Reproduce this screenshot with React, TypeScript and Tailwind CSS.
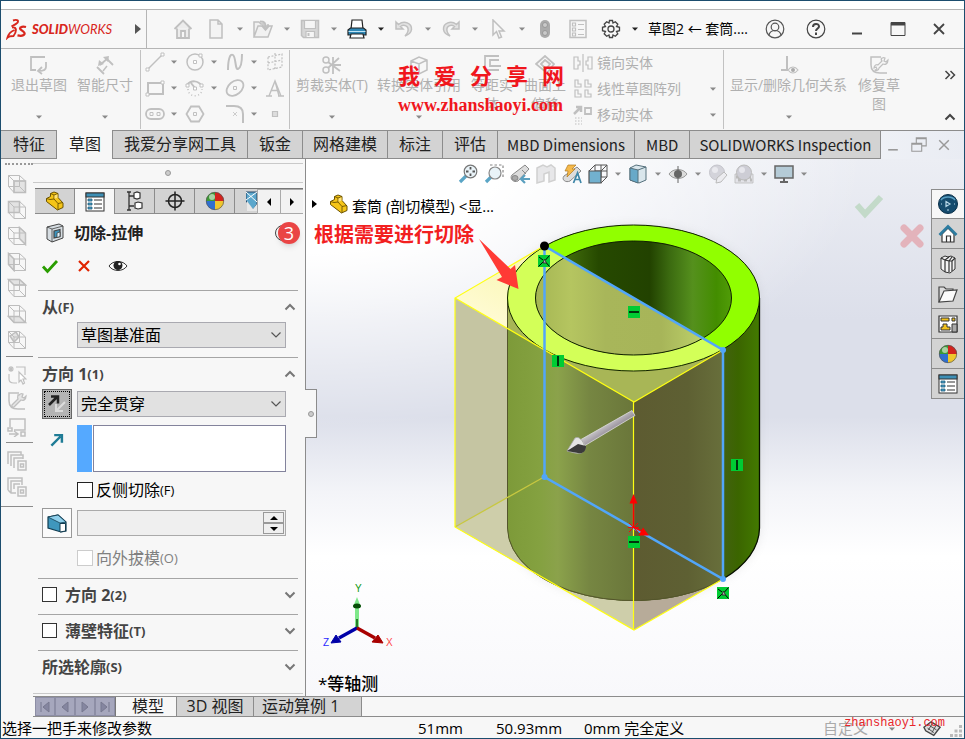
import type { ReactNode } from 'react';

/* ---------- shared bits ---------- */

interface IconProps {
  children: ReactNode;
  size?: number;
  color?: string;
}

function Icon({ children, size = 20, color = '#c0c0c0' }: IconProps) {
  return (
    <svg width={size} height={size} viewBox="0 0 20 20" fill="none" stroke={color} strokeWidth="1.5" className="shrink-0" aria-hidden="true">
      {children}
    </svg>
  );
}

function Caret({ color = '#8a8a8a' }: { color?: string }) {
  return (
    <svg width="6" height="4" viewBox="0 0 6 4" className="shrink-0" aria-hidden="true">
      <path d="M0 0.5h6L3 3.8z" fill={color} />
    </svg>
  );
}

function Chevron({ up = false }: { up?: boolean }) {
  return (
    <svg width="12" height="8" viewBox="0 0 12 8" fill="none" stroke="#777" strokeWidth="2" aria-hidden="true">
      <path d={up ? 'M1.5 6.5L6 2l4.5 4.5' : 'M1.5 1.5L6 6l4.5-4.5'} />
    </svg>
  );
}

const PartIcon = () => (
  <Icon color="#6b5200">
    <path d="M1.5 7.5l4-2V2.5L9 1l4 1.5v4l5 5.5v4.5L12.5 19 1.5 10.500z" fill="#f5c518" strokeWidth="1" />
    <path d="M5.5 2.5L9 4l4-1.5M9 4v4l4 4.500 5-1M13 12.500V19M1.5 7.500L5 8.500l4-.5" strokeWidth="0.9" />
    <path d="M9.500 4.500l3-1.300v3.500l-3 1z" fill="#ffe27a" stroke="none" />
  </Icon>
);

const BallIcon = () => (
  <Icon color="none">
    <path d="M10 10L10 1A9 9 0 0 0 1 10z" fill="#3d9b35" />
    <path d="M10 10H1a9 9 0 0 0 9 9z" fill="#2f6fd0" />
    <path d="M10 10V1a9 9 0 0 1 9 9z" fill="#d3231d" />
    <path d="M10 10h9a9 9 0 0 1-9 9z" fill="#efc62e" />
    <circle cx="7" cy="6" r="3" fill="#fff" opacity="0.55" />
    <circle cx="10" cy="10" r="8.7" stroke="#555" strokeWidth="0.7" />
  </Icon>
);

const ListIcon = () => (
  <Icon color="#333">
    <rect x="1" y="1" width="18" height="18" fill="#fff" strokeWidth="1" />
    <rect x="1" y="1" width="18" height="4" fill="#3d8fb5" strokeWidth="1" />
    <path d="M3 7h4v2H3zM3 11h4v2H3zM3 15h4v2H3z" fill="#4aa0c8" stroke="#1f5c78" strokeWidth="0.8" />
    <path d="M9 8h8M9 12h8M9 16h8" strokeWidth="1.2" />
  </Icon>
);

/* ---------- title bar ---------- */

function Logo() {
  return (
    <div className="flex w-[146px] items-center border-r border-[#b5b5b5] pl-[5px] text-[#d8261c]">
      <svg width="22" height="22" viewBox="0 0 22 22" fill="none" stroke="#d8261c" strokeWidth="1.9" aria-hidden="true">
        <path d="M7 2.500c4-1.500 7 .2 3.500 3C9 6.800 7 7.500 5.500 8.500" />
        <path d="M6 9.500c5.500-1 4.500 4.500 1.500 8.500C4.500 18 2 19 1.500 19.500c1-4 3.500-6 7-7.500" />
        <path d="M20 9c-3-.8-6-.3-6 1.500S19.500 13.500 18.500 16c-.7 1.600-4 2-7 1.400" strokeWidth="2.300" />
      </svg>
      <span className="ml-1 text-[13px] leading-5 italic font-[family-name:'Lato',sans-serif]">
        <b className="font-black">SOLID</b>WORKS
      </span>
      <svg width="6" height="10" viewBox="0 0 6 10" className="mr-[5px] ml-auto" aria-hidden="true">
        <path d="M0 0l6 5-6 5z" fill="#555" />
      </svg>
    </div>
  );
}

const quickTools: { label: string; icon: ReactNode; caret?: string }[] = [
  { label: '新建', caret: '#8a8a8a', icon: <Icon><path d="M4 1h8l4 4v14H4zM12 1v4h4" fill="#f3f3f3" /></Icon> },
  { label: '打开', caret: '#8a8a8a', icon: <Icon><path d="M1 18V3h5l2 2h3M1 18l4-11h14l-4 11zM15 5v2" fill="#f1f1f1" /><path d="M7 2.500c4.500 0 5.500 1 5.500 6M9 6.500l3.500 4L16 6.500" strokeWidth="2.200" /></Icon> },
  { label: '保存', caret: '#8a8a8a', icon: <Icon><path d="M1.500 1.500h17v17H3.500l-2-2z" fill="#d6d6d6" /><path d="M4.500 1.500h11v8h-11zM6 12.500h8.500v6H6z" fill="#f5f5f5" strokeWidth="1.200" /><path d="M8.500 14v3" strokeWidth="2" /></Icon> },
  { label: '打印', caret: '#222', icon: <Icon color="#222"><path d="M4 10l1-9h10l1 9" fill="#fff" strokeWidth="1.200" /><path d="M1 11l2.500-2h13L19 11v5H1z" fill="#2f87b5" strokeWidth="1.200" /><path d="M1.500 12.500h17" stroke="#bfe4f5" strokeWidth="1" /><path d="M4 15h12l1 4H3z" fill="#fff" strokeWidth="1.200" /></Icon> },
  { label: '撤消', caret: '#8a8a8a', icon: <Icon><path d="M2 3v7h7L6.500 7.500C10 5 15 7 14 12c-.3 2-1.500 3.500-3 5 3-1 6-3 6.500-6.500C18 4 10 1 4.500 5.500z" fill="#e2e2e2" /></Icon> },
  { label: '重做', caret: '#8a8a8a', icon: <Icon><path d="M18 3v7h-7l2.500-2.500C10 5 5 7 6 12c.3 2 1.500 3.500 3 5-3-1-6-3-6.500-6.500C2 4 10 1 15.500 5.500z" fill="#e2e2e2" /></Icon> },
  { label: '选择', caret: '#8a8a8a', icon: <Icon><path d="M5 1v15l3.500-3.500L11 19l2.500-1-2.500-6h5z" fill="#f7f7f7" /></Icon> },
];

const windowButtons: { label: string; icon: ReactNode }[] = [
  { label: '登录', icon: <Icon color="#555"><circle cx="10" cy="10" r="8.8" strokeWidth="1.2" /><circle cx="10" cy="8" r="3.8" strokeWidth="1.2" /><path d="M4 16c1-4 3-4.500 6-4.500s5 .5 6 4.500" strokeWidth="1.2" /></Icon> },
  { label: '帮助', icon: <Icon color="#444"><circle cx="10" cy="10" r="8.8" strokeWidth="1.2" /><path d="M7 8c0-4 6-4 6-.5 0 2-3 2-3 4.500M10 13.500V16" strokeWidth="2" /></Icon> },
  { label: '最小化', icon: <Icon color="#444"><path d="M5 14.500h10" strokeWidth="2" /></Icon> },
  { label: '最大化', icon: <Icon color="#444"><path d="M3 3.500h14v13H3z" strokeWidth="1" /><path d="M3 5h14" strokeWidth="3" /></Icon> },
  { label: '关闭', icon: <Icon color="#444"><path d="M5 5l10 10M15 5L5 15" strokeWidth="1.800" /></Icon> },
];

function TitleBar() {
  return (
    <header className="flex h-10 border-y border-[#b5b5b5] bg-[#f7f7f7]">
      <Logo />
      <div className="flex items-center pl-6">
        <button aria-label="主页" className="mr-[9px] flex w-6 justify-center">
          <Icon><path d="M1.500 10L10 1.500 18.500 10M4 9.500V19h12V9.500M10 1.500L18 10M8 19v-7h4v7" fill="#ececec" strokeWidth="1.800" /></Icon>
        </button>
        {quickTools.map((tool) => (
          <button key={tool.label} aria-label={tool.label} className="flex items-center">
            <span className="flex w-6 justify-center">{tool.icon}</span>
            <span className="flex w-[23px] justify-center"><Caret color={tool.caret} /></span>
          </button>
        ))}
        <button aria-label="重建" className="flex w-6 justify-center">
          <Icon><rect x="5" y="1" width="10" height="18" rx="5" fill="#ababab" stroke="none" /><circle cx="10" cy="6" r="2.500" fill="#c9c9c9" stroke="#999" strokeWidth="1" /><circle cx="10" cy="14" r="2.500" fill="#c9c9c9" stroke="#999" strokeWidth="1" /></Icon>
        </button>
        <button aria-label="文件属性" className="mx-[9px] flex w-6 justify-center">
          <Icon><path d="M2 1.500h16v17H2z" /><path d="M4.500 4h3v3h-3zM4.500 9h3v3h-3zM4.500 14h3v3h-3zM10 5.500h6M10 10.500h6M10 15.500h6" strokeWidth="1.200" /></Icon>
        </button>
        <button aria-label="选项" className="flex items-center">
          <span className="flex w-6 justify-center">
            <Icon color="#444"><circle cx="10" cy="10" r="3" strokeWidth="1.300" /><path strokeWidth="1.300" d="M8.500 1.500h3l.5 2.500 2.300-1.300 2.500 2.500L15.500 7.500l3 .8v3.400l-3 .8 1.300 2.300-2.500 2.500L12 16l-.5 2.500h-3L8 16l-2.300 1.300-2.500-2.500 1.300-2.300-3-.8V8.300l3-.8L3.200 5.200l2.500-2.500L8 4z" /></Icon>
          </span>
          <span className="flex w-[23px] justify-center"><Caret color="#222" /></span>
        </button>
      </div>
      <h1 className="ml-[2px] min-w-0 flex-1 self-center truncate text-[14px] leading-6 text-black">草图2 ← 套筒.S...</h1>
      <div className="flex items-center pr-[5px]">
        {windowButtons.map((button) => (
          <button key={button.label} aria-label={button.label} className="flex w-[41px] justify-center">{button.icon}</button>
        ))}
      </div>
    </header>
  );
}

/* ---------- ribbon ---------- */

interface RibbonButtonProps {
  label: string;
  icon: ReactNode;
  narrow?: boolean;
  caret?: boolean;
}

function RibbonButton({ label, icon, narrow = false, caret = true }: RibbonButtonProps) {
  return (
    <button className={`flex shrink-0 flex-col items-center pt-[6px] pb-[11px] ${narrow ? 'w-[44px]' : ''}`}>
      {icon}
      <span className={`leading-[19px] ${narrow ? '' : 'whitespace-nowrap'}`}>{label}</span>
      {caret && <span className="mt-auto"><Caret /></span>}
    </button>
  );
}

const Divider = () => <div className="my-px w-px shrink-0 bg-[#c2c2c2]" />;

const sketchTools: { label: string; icon: ReactNode; caret?: boolean }[] = [
  { label: '直线', caret: true, icon: <Icon><path d="M3 17L17 3" /><path d="M1 16h3v3H1zM16 1h3v3h-3z" fill="#fff" strokeWidth="1" /></Icon> },
  { label: '圆', caret: true, icon: <Icon><circle cx="10" cy="10" r="8" /><path d="M8.500 8.500h3v3h-3zM14 2h3v3h-3z" fill="#fff" strokeWidth="1" /></Icon> },
  { label: '样条曲线', caret: true, icon: <Icon><path d="M3 18C3 8 5 1 8 3s2 15 5 14c3-1 4-8 4-15" strokeWidth="2" /></Icon> },
  { label: '基准面', icon: <Icon><path d="M3 5l14-3v13L3 18zM3 11l14-3M10 1v17" strokeWidth="1.200" strokeDasharray="2 1.500" /></Icon> },
  { label: '矩形', caret: true, icon: <Icon><path d="M3 5h15v11H3z" strokeWidth="2" /><path d="M1 15h3v3H1zM16 3h3v3h-3z" fill="#fff" strokeWidth="1" /></Icon> },
  { label: '圆弧', caret: true, icon: <Icon><path d="M2 7c4-5 11-5 15 1M10 10L6 5" strokeWidth="2" /><path d="M1 6h3v3H1zM8.500 9h3v3h-3zM15 6h3v3h-3z" fill="#fff" strokeWidth="1" /><path d="M3 11c0 9 14 9 14 0" strokeDasharray="1 2.500" /></Icon> },
  { label: '椭圆', caret: true, icon: <Icon><ellipse cx="10" cy="10" rx="9.500" ry="6.500" transform="rotate(-40 10 10)" strokeWidth="1.800" /><path d="M8.500 8.500h3v3h-3z" strokeWidth="1" /></Icon> },
  { label: '文字', icon: <Icon><path d="M1 18h6M13 18h6M4 18L10 3l6 15M6 12.500h8M10 3l4 15" strokeWidth="1.400" /></Icon> },
  { label: '槽口', caret: true, icon: <Icon><rect x="1" y="5" width="18" height="10" rx="5" strokeWidth="1.800" /><path d="M5 8.500h3v3H5zM12 8.500h3v3h-3z" strokeWidth="1" /></Icon> },
  { label: '多边形', icon: <Icon><path d="M1.500 10L6 2.500h8l4.500 7.500-4.500 7.500H6z" strokeWidth="1.800" /><path d="M8.500 8.500h3v3h-3z" strokeWidth="1" /></Icon> },
  { label: '圆角', caret: true, icon: <Icon><path d="M1 2h8c6 0 9 3 9 8v9" strokeWidth="2" /><path d="M8 8l4 4M12 8l-4 4" strokeWidth="0.800" /></Icon> },
  { label: '点', icon: <Icon><path d="M7.500 7.500h5v5h-5z" fill="#ddd" strokeWidth="1.200" /></Icon> },
];

const patternTools: { label: string; icon: ReactNode; caret?: boolean }[] = [
  { label: '镜向实体', icon: <Icon><path d="M10 1v18M1 4h4v4h2v4H5v4H1zM19 4h-4v4h-2v4h2v4h4z" strokeWidth="1.200" /></Icon> },
  { label: '线性草图阵列', caret: true, icon: <Icon><path d="M2 1h3v4h3v3H2zM12 1h3v4h3v3h-6zM2 11h3v4h3v3H2zM12 11h3v4h3v3h-6z" strokeWidth="1.200" /></Icon> },
  { label: '移动实体', caret: true, icon: <Icon><path d="M1 9l6-6M3 2h5v5" strokeWidth="2.500" /><path d="M12 3h6v6h-6z" strokeWidth="1.800" /><path d="M2 13h7M2 16h7M2 19h7" strokeDasharray="1.500 1.500" strokeWidth="1.200" /></Icon> },
];

function Ribbon() {
  return (
    <section aria-label="草图工具" className="relative flex h-[81px] bg-[#f7f7f7] text-[14px] text-[#b0b0b0]">
      <div className="flex gap-[10px] pr-[7px] pl-[10px]">
        <RibbonButton label="退出草图" icon={<Icon><path d="M16 2H2v13h5M17 7v5c0 2-2 4-7 4M13 12l-4 4 4 3" strokeWidth="1.800" /></Icon>} />
        <RibbonButton label="智能尺寸" icon={<Icon><path d="M2 12l7 7M11 3l7 7M5 10l8-7" strokeWidth="1.800" /><path d="M3 11l1-6 5 4zM14 1l-1 6-5-5z" fill="#c0c0c0" stroke="none" /><path d="M12 11l-4 5" /></Icon>} />
      </div>
      <Divider />
      <div className="grid grid-cols-[40px_40px_40px_20px] grid-rows-[26px_26px_26px] px-1">
        {sketchTools.map((tool) => (
          <button key={tool.label} aria-label={tool.label} className="flex items-center">
            <span className="flex w-5 justify-center">{tool.icon}</span>
            {tool.caret && <span className="flex w-[18px] justify-center"><Caret /></span>}
          </button>
        ))}
      </div>
      <Divider />
      <div className="flex gap-[9px] px-[6px]">
        <RibbonButton label="剪裁实体(T)" icon={<Icon><circle cx="4" cy="5" r="3" /><circle cx="4" cy="15" r="3" /><path d="M6 7l12 9M6 13L17 3M11 2v17M9 10h10" strokeWidth="1.800" /></Icon>} />
        <RibbonButton label="转换实体引用" icon={<Icon><path d="M2 6l8-4 8 3v10l-8 4-8-4zM2 6l8 3 8-4M10 9v10" /></Icon>} />
        <RibbonButton narrow caret={false} label="等距实体" icon={<Icon><path d="M17 1H3v14h14M17 5H8v6h11" strokeWidth="1.800" /></Icon>} />
        <RibbonButton narrow caret={false} label="曲面上偏移" icon={<Icon><path d="M1 9l9-8 9 8-7 9zM6 9l4-4 5 4-4 5z" strokeWidth="1.800" /></Icon>} />
      </div>
      <div className="grid w-[150px] grid-rows-[26px_26px_26px] pt-px">
        {patternTools.map((tool) => (
          <button key={tool.label} className="flex items-center whitespace-nowrap">
            {tool.icon}
            <span className="ml-1 leading-5">{tool.label}</span>
            {tool.caret && <span className="mr-[7px] ml-auto"><Caret /></span>}
          </button>
        ))}
      </div>
      <Divider />
      <div className="flex gap-[10px] px-[6px]">
        <RibbonButton label="显示/删除几何关系" icon={<Icon><path d="M8 1v14M2 15h7" strokeWidth="2" /><path d="M9 15c3-4 7-4 10 0-3 4-7 4-10 0z" strokeWidth="1.200" /><circle cx="14" cy="15" r="2" fill="#aaa" stroke="none" /></Icon>} />
        <RibbonButton narrow caret={false} label="修复草图" icon={<Icon><path d="M12 2H2v8c0 5 3 8 9 8h7" /><path d="M12 4c2-2 4-1 4-1l-1 3 2 1 2-2c0 4-3 5-5 4l-4 4c0 3-4 3-4 2l2-1-1-2-2 1c0-3 3-4 4-3l4-4c-1-1-1-2 0-3z" strokeWidth="1.200" /></Icon>} />
      </div>
      <div className="mr-2 ml-auto flex flex-col items-center justify-between pt-[20px] pb-[9px]">
        <button aria-label="更多"><svg width="12" height="12" viewBox="0 0 12 12" fill="none" stroke="#444" strokeWidth="1.500"><path d="M1.500 2l4 4-4 4M6.500 2l4 4-4 4" /></svg></button>
        <button aria-label="折叠"><svg width="12" height="8" viewBox="0 0 12 8" fill="none" stroke="#444" strokeWidth="2"><path d="M1.500 6.500L6 2l4.500 4.500" /></svg></button>
      </div>

      {/* watermark over the ribbon */}
      <div className="pointer-events-none absolute top-3 left-[397px] text-[#f0161d]">
        <div className="flex gap-[14px] text-[22px] leading-[28px] font-bold">
          {['我', '爱', '分', '享', '网'].map((char) => <span key={char}>{char}</span>)}
        </div>
        <p className="mt-1 font-[family-name:'Liberation_Serif',serif] text-[18px] leading-6 font-bold">www.zhanshaoyi.com</p>
      </div>
    </section>
  );
}

const commandTabs: { label: string; pad: string }[] = [
  { label: '特征', pad: 'pr-[11px] pl-3' },
  { label: '草图', pad: 'pr-[11px] pl-3' },
  { label: '我爱分享网工具', pad: 'px-[11px]' },
  { label: '钣金', pad: 'px-[11px]' },
  { label: '网格建模', pad: 'px-[10px]' },
  { label: '标注', pad: 'px-[11px]' },
  { label: '评估', pad: 'px-[11px]' },
  { label: 'MBD Dimensions', pad: "px-[9px] text-[15px] font-[family-name:'Noto_Sans_CJK_SC',sans-serif]" },
  { label: 'MBD', pad: "px-[11px] text-[15px] font-[family-name:'Noto_Sans_CJK_SC',sans-serif]" },
  { label: 'SOLIDWORKS Inspection', pad: "px-[9px] text-[15px] font-[family-name:'Noto_Sans_CJK_SC',sans-serif]" },
];

function CommandTabs() {
  return (
    <nav className="flex h-[29px] bg-linear-to-r from-white from-65% to-[#e9ecf3] text-[16px] leading-[27px] text-[#222]">
      {commandTabs.map((tab) => (
        <button
          key={tab.label}
          className={`shrink-0 border-r border-[#8c8c8c] whitespace-nowrap ${tab.pad} ${
            tab.label === '草图' ? 'bg-[#f7f7f7]' : 'border-y bg-[#d3d3d3]'
          }`}
        >
          {tab.label}
        </button>
      ))}
      <div className="flex flex-1 items-center justify-between border-t border-[#8c8c8c] pr-3 pl-1">
        <button aria-label="最小化文档"><Icon size={16} color="#999"><path d="M4 16h12" strokeWidth="2" /></Icon></button>
        <button aria-label="还原文档"><Icon size={18} color="#999"><path d="M2 8h11v9H2zM7 8V2h11v9h-5M2 9h11M7 3h11" strokeWidth="1.200" /></Icon></button>
        <button aria-label="关闭文档"><Icon size={16} color="#999"><path d="M4 4l12 12M16 4L4 16" strokeWidth="1.800" /></Icon></button>
      </div>
    </nav>
  );
}

/* ---------- left tool column ---------- */

function WireCube({ face }: { face: string }) {
  return (
    <Icon color="#bdbdbd">
      <path d={face} fill="#e3e3e3" strokeWidth="1.500" />
      <path d="M1.500 1.500h11v11h-11zM7 7h11.500v11.500H7zM1.500 1.500L7 7M12.500 1.500l6 5.500M1.500 12.500l5.500 6M12.500 12.500l6 6" strokeWidth="1" />
    </Icon>
  );
}

const cubeFaces = ['M7 7h11.500v11.500H7z', 'M1.500 1.500h11v11h-11z', 'M12.500 1.500l6 5.500v11.500l-6-6z', 'M1.500 1.500L7 7v11.500l-5.500-6z', 'M1.500 1.500h11l6 5.500H7z', 'M1.500 12.500h11l6 6H7z', 'M3 6l6-4 3 5-5 5z'];

function SideTools() {
  return (
    <aside className="flex w-8 shrink-0 flex-col bg-[#f7f7f7]">
      <div className="mt-1 ml-1 h-0 border-t-2 border-dotted border-[#999]" />
      <div className="mt-[6px] flex flex-col">
        {cubeFaces.map((face, i) => (
          <button key={face} aria-label={`视图 ${i + 1}`} className="flex h-[26px] items-center justify-center"><WireCube face={face} /></button>
        ))}
      </div>
      <div className="mt-[3px] mb-[5px] ml-[5px] h-px bg-[#8c8c8c]" />
      <button aria-label="选取草图" className="flex h-[26px] items-center justify-center">
        <Icon><path d="M9 2h9v8M2 9v5c0 3 2 4 5 4h3M4 1v6M1 4h6M2 2l4 4M6 2L2 6" strokeWidth="1.200" /><path d="M12 7v10l2-2 2 4 1.500-1-1.500-4h3z" fill="#fff" strokeWidth="1.200" /></Icon>
      </button>
      <button aria-label="修复" className="flex h-[26px] items-center justify-center">
        <Icon><path d="M12 2H2v8c0 5 3 8 9 8h7" /><path d="M12 4c2-2 4-1 4-1l-1 3 2 1 2-2c0 4-3 5-5 4l-6 6c-1 2-4 1-3-1l6-6c-1-1 0-3 0-4z" strokeWidth="1.300" fill="#e6e6e6" /></Icon>
      </button>
      <button aria-label="转换" className="flex h-[26px] items-center justify-center">
        <Icon><path d="M3 10V2h15v11H7M1 11h4v3H1zM14 15h4v4h-4zM2 17h8M7 14l4 3-4 3" strokeWidth="1.500" /></Icon>
      </button>
      <div className="mt-[2px] mb-[5px] ml-[5px] h-px bg-[#8c8c8c]" />
      <button aria-label="图层" className="flex h-[26px] items-center justify-center">
        <Icon><path d="M1 13V1h13v3M4 15V4h12v4M7 17V7h9M11 10h8v9h-8zM13.500 13h3v3h-3z" strokeWidth="1.500" /></Icon>
      </button>
      <button aria-label="图块" className="flex h-[26px] items-center justify-center">
        <Icon><path d="M1 13V1h14v7M4 16V4h11M7 12V7h6M1 13l3 3h5M11 10h8v9h-8zM13.500 13h3v3h-3z" strokeWidth="1.500" /></Icon>
      </button>
      <div className="mt-[6px] h-px bg-[#8c8c8c]" />
    </aside>
  );
}

/* ---------- property manager ---------- */

function ManagerTabs() {
  const tabs: { label: string; icon: ReactNode }[] = [
    { label: '特征树', icon: <PartIcon /> },
    { label: '属性', icon: <ListIcon /> },
    { label: '配置', icon: <Icon color="#333"><path d="M4 1v18M2 1h4M2 19h4M4 5h5M4 15h5" strokeWidth="1.300" /><path d="M9 2l3-1 3 1v5l-3 1-3-1zM10 12l3-1 4 1v5l-4 1-3-1z" fill="#fff" strokeWidth="1.200" /></Icon> },
    { label: '尺寸专家', icon: <Icon color="#222"><circle cx="10" cy="10" r="6.500" /><path d="M10 0.500v19M0.500 10h19" /></Icon> },
    { label: '外观', icon: <BallIcon /> },
  ];

  return (
    <div className="ml-[2px] flex h-[26px] border-t border-[#777]">
      {tabs.map((tab) => (
        <button
          key={tab.label}
          aria-label={tab.label}
          className={`flex w-10 shrink-0 items-center justify-center border-r border-[#8c8c8c] ${
            tab.label === '属性' ? 'bg-[#f7f7f7]' : 'border-b bg-[#d3d3d3]'
          }`}
        >
          {tab.icon}
        </button>
      ))}
      <button aria-label="CAM" className="flex min-w-0 flex-1 items-center justify-end overflow-hidden border-b border-[#8c8c8c] bg-[#d3d3d3]">
        <svg width="11" height="20" viewBox="0 0 11 20" aria-hidden="true">
          <path d="M0 1h11v12L7 19 0 10z" fill="#5ca7cc" stroke="#246" />
          <path d="M0 1l11 10M11 1L0 9" stroke="#fff" />
          <path d="M1 10l6 8 4-5v7H1z" fill="#e8e8e8" />
        </svg>
      </button>
      <button aria-label="向左" className="flex w-6 items-center justify-center border border-[#aaa] bg-[#f2f2f2]"><svg width="4" height="8" viewBox="0 0 4 8"><path d="M4 0v8L0 4z" /></svg></button>
      <button aria-label="向右" className="flex w-[22px] items-center justify-center border-y border-[#aaa] bg-[#f2f2f2]"><svg width="4" height="8" viewBox="0 0 4 8"><path d="M0 0v8l4-4z" /></svg></button>
    </div>
  );
}

function SelectBox({ label, value }: { label: string; value: string }) {
  return (
    <div className="relative flex-1">
      <select aria-label={label} className="block h-[26px] w-full appearance-none border border-[#a9a9b0] bg-[#e1e1e1] pl-[3px] text-[16px] leading-6 text-black">
        <option>{value}</option>
      </select>
      <svg width="10" height="6" viewBox="0 0 10 6" fill="none" stroke="#555" strokeWidth="1.200" className="pointer-events-none absolute top-[10px] right-[5px]" aria-hidden="true">
        <path d="M0.500 0.500L5 5l4.500-4.500" />
      </svg>
    </div>
  );
}

interface GroupHeadingProps {
  title: string;
  hint: string;
  open?: boolean;
  checkbox?: boolean;
}

function GroupHeading({ title, hint, open = false, checkbox = false }: GroupHeadingProps) {
  return (
    <div className="flex h-[31px] items-center pr-[2px] pl-1 text-[#444]">
      <label className="flex flex-1 items-center font-bold">
        {checkbox && <input type="checkbox" className="mr-2 size-[15px] appearance-none border border-[#333] bg-white" />}
        <span className="text-[16px] leading-6">{title}</span>
        <span className="text-[13px] leading-6">{hint}</span>
      </label>
      <button aria-label={open ? '收起' : '展开'}><Chevron up={open} /></button>
    </div>
  );
}

function PropertyManager() {
  return (
    <section aria-label="属性管理器" className="relative flex w-[273px] shrink-0 flex-col border-r border-[#8c8c8c] bg-[#f7f7f7]">
      <div className="mt-1 mr-[2px] flex h-5 items-center justify-center border-y border-[#c9c9c9]">
        <span className="size-[6px] rounded-full border border-[#999] bg-[#ccc]" />
      </div>
      <div className="mt-[5px] mr-[2px]"><ManagerTabs /></div>

      <div className="mt-[7px] flex h-6 items-center pr-[5px] pl-3">
        <Icon color="#444"><path d="M2 4l12-3 4 2v12l-11 4-5-3z" fill="#d6dde2" strokeWidth="1" /><path d="M2 4l5 2v13M7 6l11-3" strokeWidth="0.800" /><path d="M9 8l6-1.500v7L9 15z" fill="#3d93bd" strokeWidth="1.200" /><path d="M12 10l3-1v4.500l-3 1z" fill="#dff1fa" strokeWidth="0.800" /></Icon>
        <h2 className="ml-[9px] flex-1 text-[16px] leading-6 font-bold text-[#222]">切除-拉伸</h2>
        <span className="size-4 rounded-full border border-[#444]" />
        <span className="-ml-[13px] flex size-[22px] items-center justify-center rounded-full bg-[#ea4545] text-[18px] leading-none text-white shadow-md">3</span>
      </div>
      <div className="mt-[9px] flex h-6 items-center gap-[14px] pl-[7px]">
        <button aria-label="确定"><Icon color="#2a9d00"><path d="M3 10.500l4.500 5L17 5" strokeWidth="2.800" /></Icon></button>
        <button aria-label="取消"><Icon color="#e02400"><path d="M5 5l10 10M15 5L5 15" strokeWidth="2.200" /></Icon></button>
        <button aria-label="细节预览"><Icon color="#333"><path d="M1 10c4-6 14-6 18 0-4 6-14 6-18 0z" fill="#fff" strokeWidth="1" /><circle cx="10" cy="9.500" r="4.500" fill="#222" stroke="none" /><circle cx="11.500" cy="8" r="1.300" fill="#fff" stroke="none" /></Icon></button>
      </div>

      <div className="mt-3 mr-[7px] ml-[5px]">
        <div className="border-t border-[#a5a5a5] pb-[9px]">
          <GroupHeading open title="从" hint="(F)" />
          <div className="flex pr-3 pl-[39px]"><SelectBox label="从" value="草图基准面" /></div>
        </div>

        <div className="border-t border-[#a5a5a5] pb-2">
          <GroupHeading open title="方向 1" hint="(1)" />
          <div className="flex items-center pr-3 pl-1">
            <button aria-label="反向" className="mr-[5px] flex size-[30px] items-center justify-center border border-[#666] bg-[#b4b4b4] outline-1 -outline-offset-3 outline-dotted outline-black">
              <Icon color="#222"><path d="M2 11l8-8M4 2.500h7v7" strokeWidth="2.500" /><path d="M18 8l-8 8M9 10v7h7" stroke="#dcdcdc" strokeWidth="2" /></Icon>
            </button>
            <SelectBox label="终止条件" value="完全贯穿" />
          </div>
          <div className="mt-[6px] flex pr-3 pl-1">
            <span className="mr-[5px] flex size-[30px] items-center justify-center">
              <Icon size={14} color="#1f7c96"><path d="M2 18L15 5M6 3h11v11" strokeWidth="3.500" /></Icon>
            </span>
            <span className="w-4 border-r border-white bg-[#55a9ff]" />
            <textarea aria-label="拉伸方向" className="block h-[47px] min-w-0 flex-1 resize-none border border-[#83839c] bg-white" />
          </div>
          <label className="mt-[6px] flex items-center pl-[39px] text-[16px] leading-6 text-black">
            <input type="checkbox" className="mr-[3px] size-4 appearance-none border border-[#222] bg-white" />
            反侧切除<span className="text-[13px]">(F)</span>
          </label>
          <div className="mt-[6px] flex items-center pr-3 pl-1">
            <button aria-label="拔模开/关" className="mr-[5px] flex size-[30px] items-center justify-center border border-[#999] bg-[#fbfbfb]">
              <Icon color="#123c50"><path d="M1 4l10-2 8 7v9l-5 1L1 15z" fill="#3f97bd" strokeWidth="1.200" /><path d="M1 4l12 6 6-1-8-7z" fill="#8fd0ec" strokeWidth="0.800" /><path d="M13 10.500h5.500v7.500l-5.500 1z" fill="#fff" strokeWidth="1" /></Icon>
            </button>
            <div className="flex h-[26px] min-w-0 flex-1 border border-[#aaa] bg-[#efefef] p-px">
              <input aria-label="拔模角度" disabled className="min-w-0 flex-1 bg-transparent" />
              <div className="flex w-[21px] flex-col text-black">
                <button aria-label="增加" className="flex flex-1 items-center justify-center border border-[#999]"><svg width="8" height="4" viewBox="0 0 8 4"><path d="M4 0l4 4H0z" /></svg></button>
                <button aria-label="减少" className="flex flex-1 items-center justify-center border border-[#999]"><svg width="8" height="4" viewBox="0 0 8 4"><path d="M0 0h8L4 4z" /></svg></button>
              </div>
            </div>
          </div>
          <label className="mt-2 flex items-center pl-[39px] text-[16px] leading-6 text-[#808080]">
            <input type="checkbox" disabled className="mr-[3px] size-4 appearance-none border border-[#ccc] bg-white" />
            向外拔模<span className="text-[13px]">(O)</span>
          </label>
        </div>

        <div className="border-t border-[#a5a5a5] pb-1"><GroupHeading checkbox title="方向 2" hint="(2)" /></div>
        <div className="border-t border-[#a5a5a5] pb-1"><GroupHeading checkbox title="薄壁特征" hint="(T)" /></div>
        <div className="border-t border-[#a5a5a5]"><GroupHeading title="所选轮廓" hint="(S)" /></div>
      </div>
      <div className="mt-auto mr-[2px] mb-[2px] border-t border-[#c9c9c9]" />

      {/* splitter handle */}
      <div className="absolute top-[230px] -right-[12px] z-10 flex h-[49px] w-3 items-center justify-center border border-l-0 border-[#8c8c8c] bg-[#f7f7f7]">
        <span className="size-[6px] rounded-full border border-[#999] bg-[#ccc]" />
      </div>
    </section>
  );
}

/* ---------- graphics area ---------- */

function Relation({ x, y, kind }: { x: number; y: number; kind: 'h' | 'v' | 'x' }) {
  return (
    <g transform={`translate(${x - 6} ${y - 6})`}>
      <rect width="12" height="12" fill="#00cc33" />
      {kind === 'h' && <path d="M1 6h10" stroke="#000" strokeWidth="1.500" />}
      {kind === 'v' && <path d="M6 1v10" stroke="#000" strokeWidth="1.500" />}
      {kind === 'x' && (
        <g stroke="#000" fill="none" strokeWidth="1">
          <path d="M11.500 0.500L7.500 5M1 2l4 3M5 7L0.500 11.500M8 7.500l3.500 4" />
          <path d="M5 8l1.500-4L8.500 8z" stroke="#333" fill="#bbb" />
        </g>
      )}
    </g>
  );
}

const BODY = 'M507.500 298A126 73 0 0 1 759.500 298V528A126 73 0 0 1 507.500 528Z';

function Model() {
  return (
    <svg viewBox="306 159 658 537" preserveAspectRatio="xMidYMid meet" className="absolute inset-0 h-full w-full" aria-label="套筒模型">
      <defs>
        <linearGradient id="wall" gradientUnits="userSpaceOnUse" x1="720" x2="760" y1="0" y2="0">
          <stop offset="0" stopColor="#446013" /><stop offset="0.450" stopColor="#3b6500" /><stop offset="1" stopColor="#437b00" />
        </linearGradient>
        <linearGradient id="wallLeft" gradientUnits="userSpaceOnUse" x1="507" x2="634" y1="0" y2="0">
          <stop offset="0" stopColor="#7d9a39" /><stop offset="0.250" stopColor="#84a140" /><stop offset="0.400" stopColor="#8ba24b" />
          <stop offset="0.650" stopColor="#768642" /><stop offset="1" stopColor="#6a763a" />
        </linearGradient>
        <linearGradient id="wallRight" gradientUnits="userSpaceOnUse" x1="634" x2="723" y1="0" y2="0">
          <stop offset="0" stopColor="#5d5b31" /><stop offset="0.600" stopColor="#5e6033" /><stop offset="1" stopColor="#686f3b" />
        </linearGradient>
        <linearGradient id="bore" gradientUnits="userSpaceOnUse" x1="536" x2="732" y1="0" y2="0">
          <stop offset="0.150" stopColor="#436f0c" /><stop offset="0.320" stopColor="#264900" /><stop offset="0.580" stopColor="#224200" /><stop offset="0.680" stopColor="#3b6a10" />
          <stop offset="0.800" stopColor="#55901d" /><stop offset="0.920" stopColor="#438d00" /><stop offset="1" stopColor="#519d08" />
        </linearGradient>
        <linearGradient id="boreCut" gradientUnits="userSpaceOnUse" x1="536" x2="710" y1="0" y2="0">
          <stop offset="0" stopColor="#a5b653" /><stop offset="0.200" stopColor="#b5c560" /><stop offset="0.400" stopColor="#a8b65a" />
          <stop offset="0.720" stopColor="#a7b559" /><stop offset="1" stopColor="#c1d66d" />
        </linearGradient>
        <linearGradient id="lid" gradientUnits="userSpaceOnUse" x1="544" x2="500" y1="246" y2="330">
          <stop offset="0" stopColor="#f7f5a8" /><stop offset="1" stopColor="#fffbd4" />
        </linearGradient>
        <linearGradient id="shaft" x1="0" x2="1" y1="0" y2="1">
          <stop offset="0.300" stopColor="#eee" /><stop offset="0.700" stopColor="#6c6270" />
        </linearGradient>
        <filter id="soft" x="-20%" y="-20%" width="140%" height="140%"><feGaussianBlur stdDeviation="5" /></filter>
        <clipPath id="body"><path d={BODY} /></clipPath>
        <clipPath id="boreClip"><ellipse cx="633.500" cy="298" rx="98" ry="57" /></clipPath>
        <clipPath id="ringClip"><ellipse cx="633.500" cy="298" rx="126" ry="73" /></clipPath>
      </defs>

      <path d={BODY} fill="#999" opacity="0.220" filter="url(#soft)" />
      {/* preview block outside the sleeve */}
      <path d="M455 298L544 246 723 350 634 402z" fill="url(#lid)" />
      <path d="M455 298L634 402V630L455 527z" fill="#c5c5a2" />
      <path d="M455 527L544 477 634 529V630z" fill="#ceceaa" />
      <path d="M634 402L723 350V579L634 630z" fill="#b7ab99" />

      {/* sleeve wall */}
      <path d={BODY} fill="url(#wall)" />
      <g clipPath="url(#body)">
        <path d="M455 298L634 402V630L455 527z" fill="url(#wallLeft)" />
        <path d="M634 402L723 350V579L634 630z" fill="url(#wallRight)" />
        <path d="M455 298L544 246 723 350 634 402z" fill="#a8b656" />
      </g>
      <path d="M507.500 298V528A126 73 0 0 0 723 579" fill="none" stroke="#54552c" />
      <path d="M723 579A126 73 0 0 0 759.500 528V298" fill="none" stroke="#071000" strokeWidth="1.300" />

      {/* top ring and bore */}
      <ellipse cx="633.500" cy="298" rx="126" ry="73" fill="#91ff00" />
      <g clipPath="url(#ringClip)"><path d="M544 246L723 350 634 402 540 400 455 298 500 230z" fill="#d3ff58" /></g>
      <ellipse cx="633.500" cy="298" rx="98" ry="57" fill="url(#bore)" />
      <g clipPath="url(#boreClip)"><path d="M544 246L723 350 634 402 455 330V246z" fill="url(#boreCut)" /></g>
      <g fill="none" stroke="#102000" strokeWidth="1">
        <ellipse cx="633.500" cy="298" rx="126" ry="73" />
        <ellipse cx="633.500" cy="298" rx="98" ry="57" />
      </g>

      {/* preview edges */}
      <path d="M455 527L544 477" stroke="#c8c840" strokeWidth="1.300" />
      <path d="M544 246L455 298V527L634 630 723 579M455 298L634 402 723 350M633.500 402V630" fill="none" stroke="#ffff12" strokeWidth="1.200" />
      <path d="M544.500 246L723 350V579L544.500 477z" fill="none" stroke="#51a6fa" strokeWidth="2.500" />
      <g fill="#51a6fa"><circle cx="723" cy="350" r="3" /><circle cx="723" cy="579" r="3" /><circle cx="544.500" cy="477" r="3" /></g>
      <circle cx="544.500" cy="246" r="4.500" fill="#000" />

      {/* drag handle */}
      <path d="M632 410.500l3 5-50 30-4-6z" fill="url(#shaft)" stroke="#ddd" strokeWidth="0.800" />
      <path d="M567 451l8-13c5-3 10 6 10 11-3 6-7 4-10 4z" fill="#e4e4e4" stroke="#aaa" strokeWidth="0.800" />
      <path d="M567 451l11-7 8 2c0 6-4 8-8 7z" fill="#3a3a3a" />

      {/* origin */}
      <g stroke="#f00" fill="#f00">
        <path d="M633.500 527V500M633.500 527l10 5" strokeWidth="1.500" />
        <path d="M633.500 494l4 9.500h-8zM649 535.500l-10.500 0 4.500-8z" stroke="none" />
        <path d="M629 523l9 9M638 523l-9 9M628 527.500h11" strokeWidth="0.900" />
      </g>
      <Relation x={544} y={261} kind="x" />
      <Relation x={634} y={312} kind="h" />
      <Relation x={558} y={361} kind="v" />
      <Relation x={737} y={465} kind="v" />
      <Relation x={634} y={542} kind="h" />
      <Relation x={723} y={593} kind="x" />

      {/* callout arrow */}
      <path d="M479 239L510.500 269 515 265 518.500 289 496.500 280 502 277z" fill="#ff3a35" />

      {/* triad */}
      <path d="M357 628V604" stroke="#7fe88a" strokeWidth="4" />
      <path d="M357 628v-9" stroke="#0a5a0a" strokeWidth="1.500" />
      <path d="M357 597l4 10h-8z" fill="#7fe88a" /><ellipse cx="357" cy="606" rx="4" ry="2.500" fill="#064d06" />
      <path d="M357 628l-18 10" stroke="#0000a8" strokeWidth="3.500" /><path d="M331 643l5-8 5 7z" fill="#0000a8" stroke="#0000a8" />
      <path d="M357 628l18 10" stroke="#a80000" strokeWidth="3.500" /><path d="M383 643l-5-8-6 7z" fill="#a80000" stroke="#a80000" />
      <g fontFamily="Liberation Sans, sans-serif" fontSize="10">
        <text x="355" y="592" fill="#109810">Y</text>
        <text x="386" y="646" fill="#ff4a4a">X</text>
        <text x="323" y="646" fill="#2a2aff">Z</text>
      </g>
    </svg>
  );
}

const lensFill = '#e9f3f8';

const viewTools: { label: string; icon: ReactNode; caret?: boolean }[] = [
  { label: '整屏显示全图', icon: <Icon color="#777"><path d="M8 12l-6 6" stroke="#5aa5c6" strokeWidth="3.200" /><circle cx="12.500" cy="7.500" r="6.300" fill={lensFill} strokeWidth="1.200" /><path d="M12.500 3v2.500M12.500 9.500V12M8 7.500h2.500M14.500 7.500H17" strokeWidth="1.800" stroke="#555" /></Icon> },
  { label: '局部放大', icon: <Icon color="#888"><path d="M6 1h13v14" strokeDasharray="2.500 2" strokeWidth="1.200" /><path d="M7 13l-5 5" stroke="#5aa5c6" strokeWidth="3.200" /><circle cx="11" cy="9" r="6" fill={lensFill} strokeWidth="1.200" /></Icon> },
  { label: '上一视图', icon: <Icon color="#888"><path d="M2 11L15 1l4 4L8 17c-4 2-9-2-6-6z" fill="#dcdcdc" strokeWidth="1" /><ellipse cx="5" cy="14" rx="3" ry="2.500" fill="#aaa" strokeWidth="1" /><path d="M12 6l4 4" strokeWidth="1" /><path d="M20 15h-8M15 11l-4 4 4 4" stroke="#5a9fbf" strokeWidth="2.200" /></Icon> },
  { label: '剖面视图', icon: <Icon color="#d0d0d0"><path d="M1 4l6-3 4 2 4-2 4 3v12l-6 2V8l-5 2v7l-7 2z" fill="#e7e7e9" /></Icon> },
  { label: '动态注解视图', icon: <Icon color="#888"><path d="M2 12L15 3l4 4L8 17c-4 2-9-1-6-5z" fill="#dcdcdc" strokeWidth="1" /><path d="M6 1h8l-4 4h3l-8 8 1-6H3z" fill="#f5b94a" stroke="#b07a20" strokeWidth="0.700" /><path d="M11.500 19l4-10 3.500 10M13 15.500h5" stroke="#3e86a8" strokeWidth="1.700" /></Icon> },
  { label: '视图定向', caret: true, icon: <Icon color="#555"><path d="M7 1h12v12H7zM1 7l6-6M13 1v12M7 7h12M13 7l6-6" strokeWidth="1" /><path d="M1 7h12v12H1z" fill="#72b1cf" strokeWidth="1.200" /><path d="M13 19l6-6" strokeWidth="1" /></Icon> },
  { label: '显示样式', caret: true, icon: <Icon color="#55707c"><path d="M2 4l6-3 10 2v13l-7 3-9-3z" fill="#d9e6ec" strokeWidth="1" /><path d="M2 4l8 2v13l-8-3z" fill="#68a9c8" strokeWidth="1" /><path d="M10 6l8-3" strokeWidth="1" /></Icon> },
  { label: '隐藏/显示项目', caret: true, icon: <Icon color="#999"><path d="M1 10c4-6 14-6 18 0-4 6-14 6-18 0z" fill="#dcdcdc" strokeWidth="1" /><circle cx="10" cy="10" r="4" fill="#666" stroke="none" /><path d="M10 2v17" stroke="#666" strokeWidth="1" /></Icon> },
  { label: '编辑外观', icon: <Icon color="#c4c4cb"><circle cx="9" cy="8.500" r="7.500" fill="#d3d3da" strokeWidth="1" /><circle cx="7" cy="6" r="3" fill="#e9e9ee" stroke="none" /><path d="M8 19l1-5 7-6 3 3-6 7z" fill="#ececf0" stroke="#bbb" strokeWidth="1" /></Icon> },
  { label: '应用布景', caret: true, icon: <Icon color="#bbb"><path d="M1 10h18v9H1z" fill="#e3e3e8" strokeWidth="0.800" /><path d="M2 13h16M4 16h14" strokeDasharray="3 3" strokeWidth="3" /><circle cx="10" cy="8.500" r="7.500" fill="#cdcdd5" strokeWidth="1" /><circle cx="8" cy="6" r="3" fill="#e6e6ec" stroke="none" /></Icon> },
  { label: '视图设定', caret: true, icon: <Icon color="#666"><path d="M1 2h18v12H1z" fill="#b5cbd7" /><path d="M10 14v3M6 18h8" strokeWidth="2" /></Icon> },
];

const taskPane: { label: string; icon: ReactNode }[] = [
  { label: '3DEXPERIENCE', icon: <Icon color="#b8d8e8"><circle cx="10" cy="10" r="9.500" fill="#164c6e" stroke="#0b3049" strokeWidth="1" /><path d="M3 6c3-4 11-4 14 0" stroke="#5aa0c4" /><path d="M8 7.500l4 2.500-4 2.500zM3 10h1M16 10h1M9 16h2" strokeWidth="1.200" /></Icon> },
  { label: '资源', icon: <Icon color="#333"><path d="M4 10v8h12v-8L10 4z" fill="#fff" strokeWidth="1.200" /><path d="M1.500 11L10 2.500 18.500 11" stroke="#2d7ca0" strokeWidth="2.800" /><path d="M8.500 18v-6h4v6" strokeWidth="1.200" /></Icon> },
  { label: '设计库', icon: <Icon color="#333"><path d="M3 4l4-2 3 1 3-1 4 2v11l-5 4-5-1-4-3z" fill="#f3f3f3" strokeWidth="1" /><path d="M3 4l4 2v12M7 6l4-3M7 6l4 1v11M11 7l3-4M11 7l3 0 0 10M14 7l3-3" strokeWidth="1.200" /></Icon> },
  { label: '文件探索器', icon: <Icon color="#444"><path d="M1 18V3h5l2 2h7v3" fill="#ddd" strokeWidth="1.200" /><path d="M1 18L6 7l13-1-4 11z" fill="#fafafa" strokeWidth="1.200" /></Icon> },
  { label: '视图调色板', icon: <Icon color="#333"><path d="M1 2h18v16H1z" fill="#fff" strokeWidth="1.200" /><path d="M3 4h8v3H3zM14 4h3v3h-3zM5 10h4v3h3v3H3v-3h2z" fill="#f2c21c" strokeWidth="1" /><path d="M14 10h5v8h-5z" fill="#aaa" strokeWidth="1" /></Icon> },
  { label: '外观、布景和贴图', icon: <BallIcon /> },
  { label: '自定义属性', icon: <ListIcon /> },
];

function GraphicsArea() {
  return (
    <main className="relative min-w-0 flex-1 overflow-hidden bg-[linear-gradient(to_bottom,#eceef4_0%,#dcdfea_30%,#dcdfea_48%,#f3f4f8_62%,#ffffff_74%,#f8f8fb_100%)]">
      <div className="absolute inset-0 bg-[radial-gradient(ellipse_85%_50%_at_0%_0%,#ffffff_35%,transparent_100%)]" />
      <Model />
      <div className="relative flex items-center justify-center pt-[2px] pr-1">
        {viewTools.map((tool) => (
          <button key={tool.label} aria-label={tool.label} className="flex h-[26px] items-center">
            <span className="flex w-[26px] justify-center">{tool.icon}</span>
            {tool.caret && <span className="flex w-[14px] justify-center"><Caret /></span>}
          </button>
        ))}
      </div>
      <div className="relative mt-[3px] flex items-center pl-[6px] text-[15px] leading-6 text-black">
        <svg width="5" height="8" viewBox="0 0 5 8" className="mr-[12px]" aria-hidden="true"><path d="M0 0l5 4-5 4z" /></svg>
        <PartIcon />
        <span className="mt-1 ml-[3px]">套筒 (剖切模型) &lt;显...</span>
      </div>
      <p className="relative mt-1 pl-2 text-[20px] leading-[26px] font-bold text-[#f2201f]">根据需要进行切除</p>

      {/* confirmation corner */}
      <button aria-label="确认" className="absolute top-[34px] right-[80px]">
        <svg width="30" height="26" viewBox="0 0 30 26" fill="none"><path d="M3 12l8 9L27 4" stroke="#c3dac9" strokeWidth="6" /></svg>
      </button>
      <button aria-label="放弃" className="absolute top-[64px] right-[39px]">
        <svg width="26" height="26" viewBox="0 0 26 26" fill="none"><path d="M5 5l16 16M21 5L5 21" stroke="#e3b3bb" strokeWidth="7" strokeLinecap="round" /></svg>
      </button>

      <nav aria-label="任务窗格" className="absolute top-[30px] right-0 flex w-[33px] flex-col border-t border-l border-[#8c8c8c]">
        {taskPane.map((item, i) => (
          <button key={item.label} aria-label={item.label} className={`flex items-center justify-center border-b border-[#8c8c8c] ${i === 0 ? 'h-[29px] bg-[#f7f7f7]' : 'h-[30px] bg-[#d3d3d3]'}`}>
            {item.icon}
          </button>
        ))}
      </nav>
      <p className="absolute bottom-0 left-3 text-[17px] leading-6 font-medium text-black">*等轴测</p>
    </main>
  );
}

/* ---------- bottom ---------- */

function ModelTabs() {
  const arrows = [
    { label: '第一个', d: 'M3 1v10M11 1v10L5 6z' },
    { label: '上一个', d: 'M10 1v10L4 6z' },
    { label: '下一个', d: 'M4 1v10l6-5z' },
    { label: '最后一个', d: 'M3 1v10l6-5zM11 1v10' },
  ];
  return (
    <nav className="flex h-[21px] border-y border-[#8c8c8c] bg-[#f7f7f7] text-[16px] leading-[19px] text-[#222]">
      <div className="ml-[2px] flex border-r border-[#777]">
        {arrows.map((arrow) => (
          <button key={arrow.label} aria-label={arrow.label} className="flex w-5 items-center justify-center border border-[#8d8ea5] bg-[#a6a7bd]">
            <svg width="14" height="12" viewBox="0 0 14 12" fill="#8586a0" stroke="#77788f"><path d={arrow.d} /></svg>
          </button>
        ))}
      </div>
      <button className="w-[60px] pl-1">模型</button>
      <button className="w-[78px] border-x border-[#8c8c8c] bg-[#d3d3d3]">3D 视图</button>
      <button className="border-r border-[#8c8c8c] bg-[#d3d3d3] pr-[22px] pl-2">运动算例 1</button>
    </nav>
  );
}

function StatusBar() {
  return (
    <footer className="relative flex h-[21px] items-center bg-[#f7f7f7] pt-[2px] pl-px text-[15px] leading-[19px] text-black">
      <span className="flex-1">选择一把手来修改参数</span>
      <span className="w-[78px]">51mm</span>
      <span className="w-[88px]">50.93mm</span>
      <span className="w-[239px]">0mm 完全定义</span>
      <span className="w-[46px] text-[#aaa]">自定义</span>
      <span className="ml-5"><Caret /></span>
      <span className="ml-7"><Icon size={18} color="#444"><path d="M1 8l8-6 10 6-7 9-9-5z" fill="#ddd" /><path d="M5 9l7 5M7 6l8 5M11 3l-5 8M15 5l-5 9" strokeWidth="1" /></Icon></span>
      <svg width="12" height="12" viewBox="0 0 12 12" fill="#bbb" className="mt-1 mr-[2px] ml-[9px]" aria-hidden="true">
        <path d="M9 0h3v3H9zM9 4.500h3v3H9zM9 9h3v3H9zM4.500 4.500h3v3h-3zM4.500 9h3v3h-3zM0 9h3v3H0z" />
      </svg>
      <span className="absolute -top-1 right-[19px] font-[family-name:'Liberation_Mono',monospace] text-[12px] leading-5 text-[#e8262b]">zhanshaoyi.com</span>
    </footer>
  );
}

export default function App() {
  return (
    <div className="flex min-h-screen flex-col border border-[#1c4d6e] bg-white font-[family-name:'Open_Sans','Noto_Sans_CJK_SC',sans-serif]">
      <div className="h-2 bg-white" />
      <TitleBar />
      <Ribbon />
      <CommandTabs />
      <div className="flex flex-1">
        <SideTools />
        <div className="flex min-w-0 flex-1 flex-col">
          <div className="flex flex-1">
            <PropertyManager />
            <GraphicsArea />
          </div>
          <ModelTabs />
        </div>
      </div>
      <StatusBar />
    </div>
  );
}
